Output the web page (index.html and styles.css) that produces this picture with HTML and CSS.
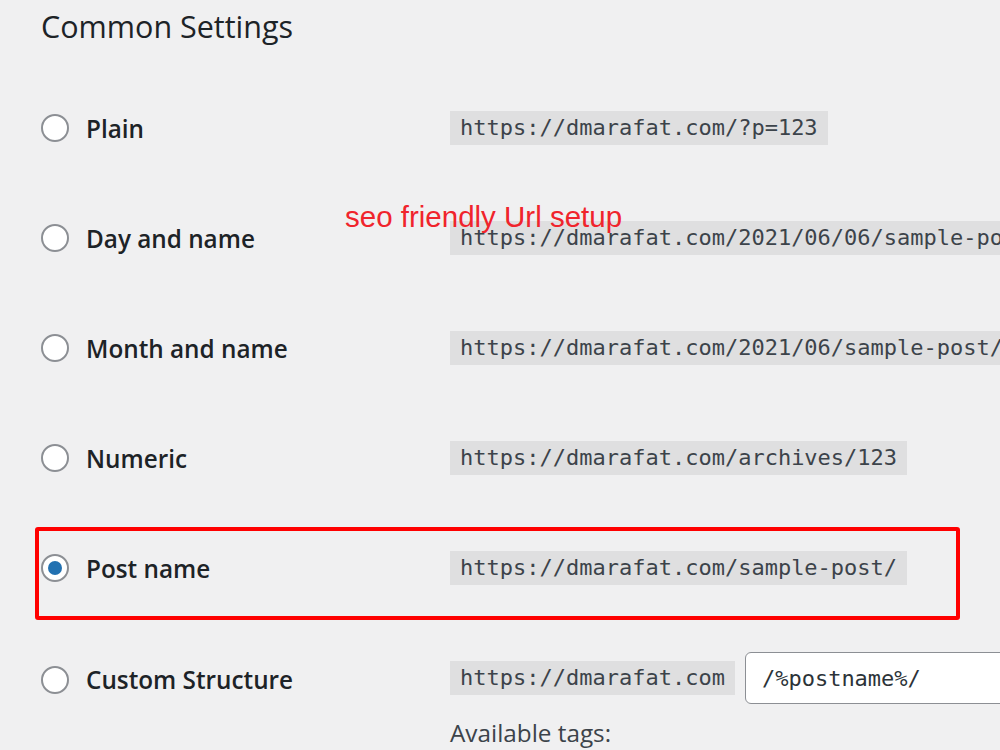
FILE: index.html
```html
<!DOCTYPE html>
<html lang="en">
<head>
  <meta charset="UTF-8">
  <title>Permalink Settings</title>
  <link rel="stylesheet" href="styles.css">
</head>
<body>
  <div class="wrap">
    <h2 class="title">Common Settings</h2>

    <div class="row">
      <label class="choice"><span class="radio"></span>Plain</label>
      <div class="value"><code>https://dmarafat.com/?p=123</code></div>
    </div>

    <div class="row">
      <label class="choice"><span class="radio"></span>Day and name</label>
      <div class="value"><code>https://dmarafat.com/2021/06/06/sample-post/</code></div>
      <span class="note">seo friendly Url setup</span>
    </div>

    <div class="row">
      <label class="choice"><span class="radio"></span>Month and name</label>
      <div class="value"><code>https://dmarafat.com/2021/06/sample-post/</code></div>
    </div>

    <div class="row">
      <label class="choice"><span class="radio"></span>Numeric</label>
      <div class="value"><code>https://dmarafat.com/archives/123</code></div>
    </div>

    <div class="row">
      <label class="choice"><span class="radio checked"></span>Post name</label>
      <div class="value"><code>https://dmarafat.com/sample-post/</code></div>
      <div class="highlight"></div>
    </div>

    <div class="row custom">
      <label class="choice"><span class="radio"></span>Custom Structure</label>
      <div class="value">
        <div class="structure">
          <code>https://dmarafat.com</code>
          <input class="field" type="text" value="/%postname%/">
        </div>
        <p class="tags">Available tags:</p>
      </div>
    </div>
  </div>
</body>
</html>
```

FILE: styles.css
```css
html, body {
  margin: 0;
  height: 100%;
  overflow: hidden;
}
body {
  background: #f0f0f1;
  color: #1d2327;
  font-family: "Open Sans", "Noto Sans", sans-serif;
}
.wrap {
  padding-left: 41px;
  width: 1400px;
}
.title {
  margin: 0;
  height: 73px;
  font-size: 30.5px;
  font-weight: 500;
  line-height: 52px;
  color: #1d2327;
}
.row {
  position: relative;
  display: grid;
  grid-template-columns: 409px 1fr;
  align-items: center;
  height: 110px;
}
.choice {
  display: flex;
  align-items: center;
  gap: 17px;
  font-size: 24.3px;
  font-weight: 600;
}
.radio {
  width: 24px;
  height: 24px;
  border: 2px solid #8c8f94;
  border-radius: 50%;
  background: #fff;
  display: flex;
  align-items: center;
  justify-content: center;
}
.radio.checked::after {
  content: "";
  width: 14px;
  height: 14px;
  border-radius: 50%;
  background: #2271b1;
}
code {
  display: inline-block;
  background: #dfdfe0;
  color: #3c434a;
  font-family: "DejaVu Sans Mono", monospace;
  font-size: 22px;
  line-height: 34px;
  padding: 0 10px;
  white-space: nowrap;
}
.note {
  position: absolute;
  left: 304px;
  top: 17px;
  color: #f0242c;
  font-family: "Liberation Sans", Arial, sans-serif;
  font-size: 29.5px;
}
.highlight {
  position: absolute;
  left: -6px;
  top: 14px;
  width: 917px;
  height: 85px;
  border: 4px solid #f00;
  border-radius: 3px;
}
.row.custom {
  align-items: start;
}
.row.custom .choice {
  margin-top: 40px;
}
.structure {
  display: flex;
  align-items: center;
  gap: 10px;
  margin-top: 29px;
}
.field {
  width: 400px;
  height: 52px;
  box-sizing: border-box;
  border: 1px solid #8c8f94;
  border-radius: 6px;
  background: #fff;
  padding: 0 16px;
  font-family: "DejaVu Sans Mono", monospace;
  font-size: 22px;
  color: #2c3338;
}
.tags {
  margin: 12px 0 0;
  font-size: 24.3px;
  color: #3c434a;
}
```
